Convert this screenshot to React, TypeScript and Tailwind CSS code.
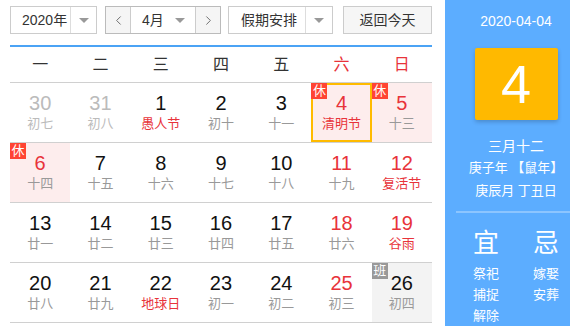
import React from 'react';
import { ChevronLeft, ChevronRight } from 'lucide-react';

type Day = {
  n: number;
  lunar: string;
  other?: boolean;
  redNum?: boolean;
  redLunar?: boolean;
  rest?: boolean;
  work?: boolean;
  selected?: boolean;
};

const weeks: Day[][] = [
  [
    { n: 30, lunar: '初七', other: true },
    { n: 31, lunar: '初八', other: true },
    { n: 1, lunar: '愚人节', redLunar: true },
    { n: 2, lunar: '初十' },
    { n: 3, lunar: '十一' },
    { n: 4, lunar: '清明节', redNum: true, redLunar: true, rest: true, selected: true },
    { n: 5, lunar: '十三', redNum: true, rest: true },
  ],
  [
    { n: 6, lunar: '十四', redNum: true, rest: true },
    { n: 7, lunar: '十五' },
    { n: 8, lunar: '十六' },
    { n: 9, lunar: '十七' },
    { n: 10, lunar: '十八' },
    { n: 11, lunar: '十九', redNum: true },
    { n: 12, lunar: '复活节', redNum: true, redLunar: true },
  ],
  [
    { n: 13, lunar: '廿一' },
    { n: 14, lunar: '廿二' },
    { n: 15, lunar: '廿三' },
    { n: 16, lunar: '廿四' },
    { n: 17, lunar: '廿五' },
    { n: 18, lunar: '廿六', redNum: true },
    { n: 19, lunar: '谷雨', redNum: true, redLunar: true },
  ],
  [
    { n: 20, lunar: '廿八' },
    { n: 21, lunar: '廿九' },
    { n: 22, lunar: '地球日', redLunar: true },
    { n: 23, lunar: '初一' },
    { n: 24, lunar: '初二' },
    { n: 25, lunar: '初三', redNum: true },
    { n: 26, lunar: '初四', work: true },
  ],
];

const Caret = () => (
  <span className="w-0 h-0 border-x-[5px] border-x-transparent border-t-[5px] border-t-[#999]" />
);

const DayCell = ({ d }: { d: Day }) => {
  const bg = d.rest ? 'bg-[#fdeded]' : d.work ? 'bg-[#f3f3f3]' : '';
  const numColor = d.other ? 'text-[#bbb]' : d.redNum ? 'text-[#e8333a]' : 'text-[#111]';
  const lunarColor = d.redLunar ? 'text-[#e8333a]' : d.other ? 'text-[#bbb]' : 'text-[#999]';
  return (
    <div className={`relative h-[59px] flex flex-col items-center pt-[8px] ${bg}`}>
      {d.selected && <div className="absolute inset-0 border-2 border-[#ffbb00]" />}
      {d.rest && (
        <span className="absolute left-0 top-0 w-[16px] h-[16px] bg-[#ff4433] text-white text-[13px] leading-[16px] text-center">
          休
        </span>
      )}
      {d.work && (
        <span className="absolute left-0 top-0 w-[16px] h-[16px] bg-[#999] text-white text-[13px] leading-[16px] text-center">
          班
        </span>
      )}
      <span className={`text-[20px] leading-[24px] ${numColor}`}>{d.n}</span>
      <span className={`text-[13px] leading-[18px] ${lunarColor}`}>{d.lunar}</span>
    </div>
  );
};

const App: React.FC = () => {
  return (
    <div className="w-[570px] h-[326px] overflow-hidden bg-white font-['Liberation_Sans','Noto_Sans_CJK_SC',sans-serif]">
      <div className="flex">
        <div className="w-[422px] ml-[10px] shrink-0">
          <div className="flex items-center h-[28px] mt-[6px] text-[14px] text-[#333]">
            <div className="flex h-[28px] w-[87px] border border-[#ccc]">
              <span className="flex-1 pl-[11px] leading-[26px]">2020年</span>
              <span className="w-[26px] border-l border-[#ddd] flex items-center justify-center">
                <Caret />
              </span>
            </div>
            <div className="flex h-[28px] w-[116px] ml-[8px] border border-[#bbb]">
              <span className="w-[25px] bg-[#f5f5f5] border-r border-[#ccc] flex items-center justify-center text-[#666]">
                <ChevronLeft size={15} strokeWidth={1.5} />
              </span>
              <span className="flex-1 flex items-center pl-[11px] pr-[10px] justify-between">
                <span>4月</span>
                <Caret />
              </span>
              <span className="w-[25px] bg-[#f5f5f5] border-l border-[#ccc] flex items-center justify-center text-[#666]">
                <ChevronRight size={15} strokeWidth={1.5} />
              </span>
            </div>
            <div className="flex h-[28px] w-[105px] ml-[7px] border border-[#ccc]">
              <span className="flex-1 pl-[12px] leading-[26px]">假期安排</span>
              <span className="w-[27px] border-l border-[#ddd] flex items-center justify-center">
                <Caret />
              </span>
            </div>
            <div className="h-[28px] w-[89px] ml-[10px] border border-[#ccc] bg-[#f6f6f6] flex items-center justify-center">
              返回今天
            </div>
          </div>
          <div className="mt-[11px] h-[2px] bg-[#4ba3f5]" />
          <div className="grid grid-cols-7 h-[36px] border-b border-[#d0d0d0] text-[16px] text-[#333]">
            {['一', '二', '三', '四', '五', '六', '日'].map((w, i) => (
              <div key={w} className={`flex items-center justify-center ${i > 4 ? 'text-[#e8333a]' : ''}`}>
                {w}
              </div>
            ))}
          </div>
          {weeks.map((row, i) => (
            <div key={i} className="grid grid-cols-7 border-b border-[#d0d0d0]">
              {row.map((d) => (
                <DayCell key={`${i}-${d.n}`} d={d} />
              ))}
            </div>
          ))}
        </div>
        <div className="w-[142px] ml-[13px] shrink-0 h-[326px] bg-[#5cadff] text-white flex flex-col items-center">
          <div className="mt-[12px] text-[14px] leading-[18px]">2020-04-04</div>
          <div className="mt-[18px] w-[83px] h-[82px] bg-[#ffb900] rounded-[2px] shadow-[0_2px_4px_rgba(0,0,0,0.2)] flex items-center justify-center text-[54px] leading-none">
            4
          </div>
          <div className="mt-[15px] text-[14px] leading-[22px]">三月十二</div>
          <div className="text-[13px] leading-[22px]">庚子年 【鼠年】</div>
          <div className="text-[13px] leading-[24px]">庚辰月 丁丑日</div>
          <div className="mt-[8px] w-[120px] h-[2px] bg-[#8cc5ff]" />
          <div className="mt-[15px] flex gap-[34px]">
            <div className="flex flex-col items-center w-[26px]">
              <span className="text-[26px] leading-[30px]">宜</span>
              <span className="mt-[5px] text-[13px] leading-[21px] whitespace-nowrap">祭祀</span>
              <span className="text-[13px] leading-[21px] whitespace-nowrap">捕捉</span>
              <span className="text-[13px] leading-[21px] whitespace-nowrap">解除</span>
            </div>
            <div className="flex flex-col items-center w-[26px]">
              <span className="text-[26px] leading-[30px]">忌</span>
              <span className="mt-[5px] text-[13px] leading-[21px] whitespace-nowrap">嫁娶</span>
              <span className="text-[13px] leading-[21px] whitespace-nowrap">安葬</span>
            </div>
          </div>
        </div>
      </div>
    </div>
  );
};

export default App;
